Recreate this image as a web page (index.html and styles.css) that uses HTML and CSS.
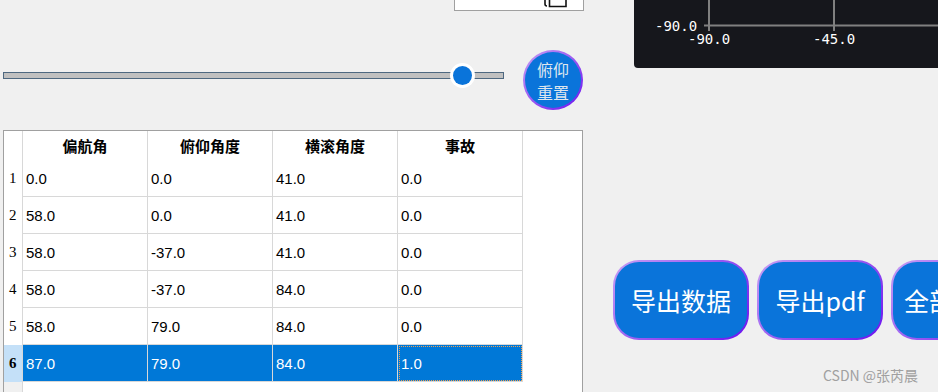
FILE: index.html
```html
<!DOCTYPE html>
<html>
<head>
    <meta charset="utf-8">
    <title>姿态数据</title>
    <link rel="stylesheet" href="styles.css">
</head>
<body>
<div class="app">
    <div class="left">
        <div class="topbox">
            <svg class="glyph" width="24" height="8" viewBox="0 0 24 8">
                <path d="M1 0 L1 4 Q1 6 3 6" fill="none" stroke="#111" stroke-width="1.6"/>
                <path d="M5.5 0 L5.5 6.5 L22 6.5 L22 0" fill="none" stroke="#111" stroke-width="1.6"/>
            </svg>
        </div>

        <div class="slider-row">
            <div class="track">
                <div class="handle"><span></span></div>
            </div>
            <button class="round-btn"><span>俯仰</span><span>重置</span></button>
        </div>

        <div class="tbl">
            <div class="rh"></div>
            <div class="c h">偏航角</div>
            <div class="c h">俯仰角度</div>
            <div class="c h">横滚角度</div>
            <div class="c h">事故</div>
            <div class="rest"></div>

            <div class="rh">1</div>
            <div class="c">0.0</div><div class="c">0.0</div><div class="c">41.0</div><div class="c">0.0</div>
            <div class="rest"></div>

            <div class="rh">2</div>
            <div class="c">58.0</div><div class="c">0.0</div><div class="c">41.0</div><div class="c">0.0</div>
            <div class="rest"></div>

            <div class="rh">3</div>
            <div class="c">58.0</div><div class="c">-37.0</div><div class="c">41.0</div><div class="c">0.0</div>
            <div class="rest"></div>

            <div class="rh">4</div>
            <div class="c">58.0</div><div class="c">-37.0</div><div class="c">84.0</div><div class="c">0.0</div>
            <div class="rest"></div>

            <div class="rh">5</div>
            <div class="c">58.0</div><div class="c">79.0</div><div class="c">84.0</div><div class="c">0.0</div>
            <div class="rest"></div>

            <div class="rh sel">6</div>
            <div class="c sel">87.0</div><div class="c sel">79.0</div><div class="c sel">84.0</div><div class="c sel focus">1.0</div>
            <div class="rest"></div>

            <div class="rh empty"></div>
            <div class="filler"></div>
        </div>
    </div>

    <div class="right">
        <div class="chart">
            <svg width="304" height="68" viewBox="0 0 304 68">
                <line x1="70" y1="25.5" x2="304" y2="25.5" stroke="#808080" stroke-width="2"/>
                <line x1="75" y1="0" x2="75" y2="31" stroke="#808080" stroke-width="2"/>
                <line x1="200" y1="0" x2="200" y2="31" stroke="#808080" stroke-width="2"/>
                <text x="21" y="30.5" class="lbl">-90.0</text>
                <text x="54" y="44" class="lbl">-90.0</text>
                <text x="179" y="44" class="lbl">-45.0</text>
            </svg>
        </div>
        <div class="buttons">
            <button class="pill wide">导出数据</button>
            <button class="pill">导出pdf</button>
            <button class="pill">全部清空</button>
        </div>
    </div>
</div>
<div class="watermark">CSDN @张芮晨</div>
</body>
</html>
```

FILE: styles.css
```css
html,
body {
    margin: 0;
    padding: 0;
    width: 938px;
    height: 392px;
    overflow: hidden;
    background-color: #f0f0f0;
    font-family: "Liberation Sans", "Noto Sans CJK SC", sans-serif;
}

.app {
    display: flex;
    align-items: flex-start;
}

.left {
    width: 580px;
    margin-left: 3px;
    flex-shrink: 0;
}

.topbox {
    box-sizing: border-box;
    margin-left: 451px;
    width: 130px;
    height: 11px;
    background: #fff;
    border: 1px solid #a0a0a0;
    border-top: none;
    position: relative;
}

.topbox .glyph {
    position: absolute;
    left: 89px;
    top: 0;
}

/* slider + round button */
.slider-row {
    display: flex;
    align-items: flex-start;
    margin-top: 39px;
}

.track {
    box-sizing: border-box;
    width: 501px;
    height: 7px;
    margin-top: 22px;
    background: #c0c0c0;
    border: 1px solid #4e6880;
    position: relative;
}

.handle {
    position: absolute;
    left: 446px;
    top: -10px;
    width: 25px;
    height: 25px;
    border-radius: 50%;
    background: #fff;
    display: flex;
    align-items: center;
    justify-content: center;
}

.handle span {
    width: 19px;
    height: 19px;
    border-radius: 50%;
    background: #0a74da;
}

.round-btn {
    box-sizing: border-box;
    width: 60px;
    height: 60px;
    margin-left: 19px;
    padding: 0;
    border-radius: 50%;
    border: 2px solid transparent;
    background: linear-gradient(#0a74da, #0a74da) padding-box,
                linear-gradient(135deg, #c8a0f4, #6a10f0) border-box;
    color: #dfe6ee;
    font-family: "Noto Sans CJK SC", sans-serif;
    font-size: 16px;
    display: flex;
    flex-direction: column;
    align-items: center;
    justify-content: center;
    gap: 1px;
}

.round-btn span {
    display: block;
    line-height: 22px;
    height: 22px;
}

/* table */
.tbl {
    box-sizing: border-box;
    margin-top: 20px;
    width: 580px;
    height: 272px;
    border: 1px solid #a0a0a0;
    background: #fff;
    display: grid;
    grid-template-columns: 19px repeat(4, 125px) 1fr;
    grid-template-rows: 29px repeat(6, 37px) 1fr;
}

.rh {
    box-sizing: border-box;
    border-right: 1px solid #d8d8d8;
    font-family: "Liberation Serif", serif;
    font-size: 15px;
    color: #000;
    display: flex;
    align-items: center;
    padding-left: 5px;
    padding-bottom: 1px;
}

.rh.sel {
    background: #c4e0f8;
    font-weight: bold;
}

.rh.empty {
    background: #f0f0f0;
}

.c {
    box-sizing: border-box;
    border-right: 1px solid #d8d8d8;
    border-bottom: 1px solid #d8d8d8;
    font-size: 15px;
    color: #000;
    display: flex;
    align-items: center;
    padding-left: 3px;
}

.c.h {
    border-bottom: none;
    justify-content: center;
    padding-left: 0;
    font-family: "Noto Sans CJK SC", sans-serif;
    font-weight: bold;
    font-size: 15px;
}

.c.sel {
    background: #0078d7;
    color: #fff;
}

.c.focus {
    outline: 1px dotted #f0a050;
    outline-offset: -2px;
}

.filler {
    grid-column: 2 / 7;
}

/* right side */
.right {
    margin-left: 30px;
    flex-shrink: 0;
}

.chart {
    margin-left: 21px;
    width: 304px;
    height: 68px;
    background: #16171c;
    border-bottom-left-radius: 4px;
}

.chart svg {
    display: block;
}

.lbl {
    fill: #fff;
    font-family: "DejaVu Sans Mono", monospace;
    font-size: 14px;
}

.buttons {
    display: flex;
    gap: 8px;
    margin-top: 192px;
}

.pill {
    box-sizing: border-box;
    flex-shrink: 0;
    width: 126px;
    height: 80px;
    padding: 0;
    border-radius: 26px;
    border: 2px solid transparent;
    background: linear-gradient(#0a74da, #0a74da) padding-box,
                linear-gradient(135deg, #c8a0f4, #6a10f0) border-box;
    color: #fff;
    font-family: "Noto Sans CJK SC", sans-serif;
    font-size: 25px;
    white-space: nowrap;
}

.pill.wide {
    width: 136px;
}

.watermark {
    position: absolute;
    left: 823px;
    top: 365px;
    color: #a0a0a0;
    font-family: "Noto Sans CJK SC", sans-serif;
    font-size: 14px;
}
```
